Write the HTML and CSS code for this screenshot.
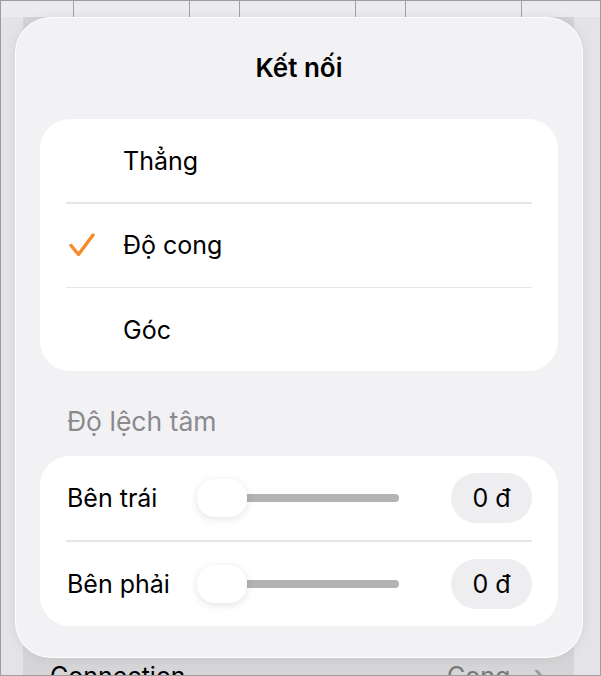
FILE: index.html
```html
<!DOCTYPE html>
<html lang="vi">
<head>
<meta charset="utf-8">
<title>Kết nối</title>
<link rel="stylesheet" href="styles.css">
</head>
<body>
<div class="frame">
  <div class="topbar">
    <span class="col w1"></span>
    <span class="col w2"></span>
    <span class="col w3"></span>
    <span class="col w2"></span>
    <span class="col w3"></span>
    <span class="col w2"></span>
    <span class="col last"></span>
  </div>
  <div class="panel">
    <div class="panel-row">
      <span class="panel-label">Connection</span>
      <span class="panel-val">Cong</span>
      <span class="chev">›</span>
    </div>
  </div>

  <div class="popover">
    <div class="title">Kết nối</div>
    <div class="card">
      <div class="opt"><span class="mark"></span><span>Thẳng</span></div>
      <div class="sep"></div>
      <div class="opt"><span class="mark"><svg class="check" width="26" height="24" viewBox="0 0 26 24"><polyline points="2,12.5 9.5,21.5 24,2" fill="none" stroke="#f68b2c" stroke-width="3.4" stroke-linecap="round" stroke-linejoin="round"/></svg></span><span>Độ cong</span></div>
      <div class="sep"></div>
      <div class="opt"><span class="mark"></span><span>Góc</span></div>
    </div>
    <div class="section">Độ lệch tâm</div>
    <div class="card">
      <div class="srow">
        <span class="slabel">Bên trái</span>
        <div class="slider"><div class="track"></div><div class="thumb"></div></div>
        <span class="pill">0 đ</span>
      </div>
      <div class="sep"></div>
      <div class="srow">
        <span class="slabel">Bên phải</span>
        <div class="slider"><div class="track"></div><div class="thumb"></div></div>
        <span class="pill">0 đ</span>
      </div>
    </div>
  </div>
</div>
</body>
</html>
```

FILE: styles.css
```css
* { box-sizing: border-box; }
html, body { margin: 0; padding: 0; }
body {
  width: 601px;
  height: 676px;
  overflow: hidden;
  font-family: Inter, "Noto Sans", "Liberation Sans", sans-serif;
  color: #000;
  background: #e6e6ea;
}
.frame {
  position: relative;
  width: 601px;
  height: 676px;
  border: 1px solid #9d9d9d;
  background: #e4e4e8;
  overflow: hidden;
  display: flex;
  flex-direction: column;
}
.topbar {
  height: 16px;
  display: flex;
  background: #ececf0;
  flex: none;
}
.col { border-right: 1px solid #a2a2a4; height: 100%; }
.w1 { width: 73px; }
.w2 { width: 116px; }
.w3 { width: 50px; }
.col.last { flex: 1; border-right: none; }
.panel {
  flex: 1;
  margin: 0 26px 0 22px;
  background: #d5d5d8;
  display: flex;
  flex-direction: column;
  justify-content: flex-end;
}
.panel-row {
  height: 30px;
  margin-bottom: -16px;
  display: flex;
  align-items: center;
  padding-left: 27px;
  font-size: 25px;
  line-height: 30px;
}
.panel-label { width: 397px; }
.panel-val { width: 86px; color: #777; }
.chev { color: #999; font-size: 34px; }

.popover {
  position: absolute;
  left: 14px;
  top: 16px;
  width: 568px;
  height: 641px;
  border-radius: 36px;
  border: 1px solid rgba(255,255,255,0.95);
  background: #f2f2f4;
  box-shadow: 0 0 12px rgba(0,0,0,0.08);
  padding: 0 24px;
}
.title {
  height: 101px;
  display: flex;
  align-items: center;
  justify-content: center;
  font-size: 26px;
  font-weight: 600;
  padding-bottom: 2px;
}
.card {
  background: #fff;
  border-radius: 30px;
}
.opt {
  height: 83px;
  display: flex;
  align-items: center;
  font-size: 25px;
}
.mark {
  width: 83px;
  flex: none;
  padding-left: 29px;
  display: flex;
  align-items: center;
}
.check { display: block; }
.sep {
  height: 1.5px;
  margin: 0 26px;
  background: #e6e6e8;
}
.section {
  padding: 36px 27px 21px;
  line-height: 28px;
  font-size: 26.5px;
  color: #8a8a8e;
}
.srow {
  height: 84px;
  display: flex;
  align-items: center;
  padding: 0 26px 0 27px;
  font-size: 25px;
}
.slabel { width: 130px; flex: none; }
.slider {
  width: 202px;
  height: 38px;
  display: grid;
  align-items: center;
  flex: none;
}
.track {
  grid-area: 1 / 1;
  height: 8px;
  margin-left: 25px;
  border-radius: 4px;
  background: #b3b3b3;
}
.thumb {
  grid-area: 1 / 1;
  width: 50px;
  height: 38px;
  border-radius: 17px;
  background: #fff;
  box-shadow: 0 2px 8px rgba(0,0,0,0.11), 0 0 1px rgba(0,0,0,0.06);
}
.pill {
  margin-left: auto;
  width: 81px;
  height: 50px;
  border-radius: 25px;
  background: #eeeef0;
  display: flex;
  align-items: center;
  justify-content: center;
  font-size: 25px;
}
```
